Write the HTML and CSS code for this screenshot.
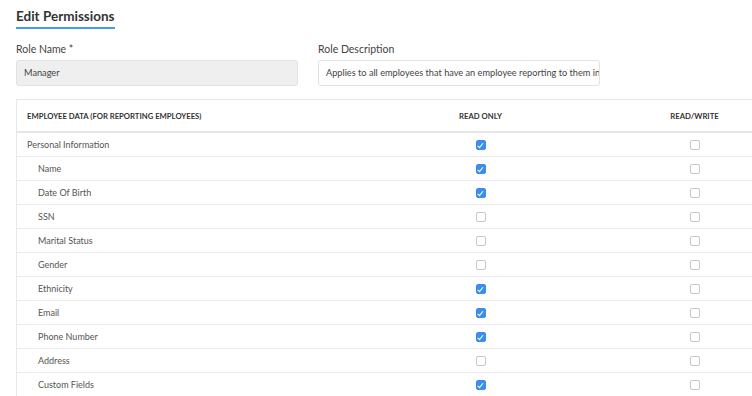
FILE: index.html
```html
<!DOCTYPE html>
<html lang="en">
<head>
    <meta charset="UTF-8">
    <title>Edit Permissions</title>
    <link rel="stylesheet" href="styles.css">
</head>
<body>
    <div class="page">
        <h1 class="title">Edit Permissions</h1>

        <div class="fields">
            <div class="field">
                <label>Role Name *</label>
                <div class="input input-disabled">Manager</div>
            </div>
            <div class="field">
                <label>Role Description</label>
                <div class="input">Applies to all employees that have an employee reporting to them in</div>
            </div>
        </div>

        <table class="perms">
            <colgroup>
                <col class="c-name">
                <col class="c-perm">
                <col class="c-perm">
            </colgroup>
            <thead>
                <tr>
                    <th class="col-name">Employee Data (for reporting employees)</th>
                    <th>Read Only</th>
                    <th>Read/Write</th>
                </tr>
            </thead>
            <tbody>
                <tr>
                    <td class="col-name">Personal Information</td>
                    <td><span class="box checked"></span></td>
                    <td><span class="box"></span></td>
                </tr>
                <tr>
                    <td class="col-name sub">Name</td>
                    <td><span class="box checked"></span></td>
                    <td><span class="box"></span></td>
                </tr>
                <tr>
                    <td class="col-name sub">Date Of Birth</td>
                    <td><span class="box checked"></span></td>
                    <td><span class="box"></span></td>
                </tr>
                <tr>
                    <td class="col-name sub">SSN</td>
                    <td><span class="box"></span></td>
                    <td><span class="box"></span></td>
                </tr>
                <tr>
                    <td class="col-name sub">Marital Status</td>
                    <td><span class="box"></span></td>
                    <td><span class="box"></span></td>
                </tr>
                <tr>
                    <td class="col-name sub">Gender</td>
                    <td><span class="box"></span></td>
                    <td><span class="box"></span></td>
                </tr>
                <tr>
                    <td class="col-name sub">Ethnicity</td>
                    <td><span class="box checked"></span></td>
                    <td><span class="box"></span></td>
                </tr>
                <tr>
                    <td class="col-name sub">Email</td>
                    <td><span class="box checked"></span></td>
                    <td><span class="box"></span></td>
                </tr>
                <tr>
                    <td class="col-name sub">Phone Number</td>
                    <td><span class="box checked"></span></td>
                    <td><span class="box"></span></td>
                </tr>
                <tr>
                    <td class="col-name sub">Address</td>
                    <td><span class="box"></span></td>
                    <td><span class="box"></span></td>
                </tr>
                <tr>
                    <td class="col-name sub">Custom Fields</td>
                    <td><span class="box checked"></span></td>
                    <td><span class="box"></span></td>
                </tr>
            </tbody>
        </table>
    </div>
</body>
</html>
```

FILE: styles.css
```css
body {
    margin: 0;
    background-color: #ffffff;
    color: #444444;
    font-family: 'Lato', sans-serif;
    overflow: hidden;
}

.page {
    padding: 0 16px;
    width: 800px;
}

/* Page title with blue underline */
.title {
    display: inline-block;
    margin: 0;
    padding: 8px 0 3px 0;
    font-size: 13.5px;
    font-weight: 700;
    color: #333333;
    border-bottom: 2px solid #4a9be6;
}

.fields {
    display: grid;
    grid-template-columns: 282px 282px;
    column-gap: 20px;
    margin-top: 14px;
}

.field label {
    display: block;
    font-size: 10.5px;
    color: #444444;
    margin-bottom: 5px;
}

.input {
    box-sizing: border-box;
    height: 26px;
    padding: 0 7px;
    font-size: 9.2px;
    line-height: 24px;
    color: #444444;
    border: 1px solid #e2e2e2;
    border-radius: 3px;
    background-color: #ffffff;
    white-space: nowrap;
    overflow: hidden;
}

.input-disabled {
    background-color: #efefef;
}

/* Permissions table */
.perms {
    table-layout: fixed;
    width: 785px;
    margin-top: 13px;
    border-collapse: collapse;
    border-top: 1px solid #e8e8e8;
    border-left: 1px solid #e8e8e8;
    font-size: 9px;
}

.c-name {
    width: 357px;
}

.c-perm {
    width: 214px;
}

.perms th {
    height: 31px;
    padding: 0;
    font-size: 7.7px;
    font-weight: 700;
    text-transform: uppercase;
    color: #333333;
    text-align: center;
    border-bottom: 2px solid #e6e6e6;
}

.perms td {
    height: 23px;
    padding: 0;
    text-align: center;
    border-bottom: 1px solid #ececec;
    color: #555555;
}

.perms .col-name {
    text-align: left;
    padding-left: 10px;
}

.perms .sub {
    padding-left: 21px;
}

.box {
    display: inline-block;
    box-sizing: border-box;
    width: 10px;
    height: 10px;
    border: 1px solid #c8c8c8;
    border-radius: 2px;
    background-color: #ffffff;
    vertical-align: middle;
    position: relative;
}

.box.checked {
    background-color: #3d8eea;
    border-color: #3d8eea;
}

.box.checked::after {
    content: "";
    position: absolute;
    left: 2.5px;
    top: 0.5px;
    width: 2px;
    height: 4.5px;
    border-right: 1.2px solid #ffffff;
    border-bottom: 1.2px solid #ffffff;
    transform: rotate(40deg);
}
```
